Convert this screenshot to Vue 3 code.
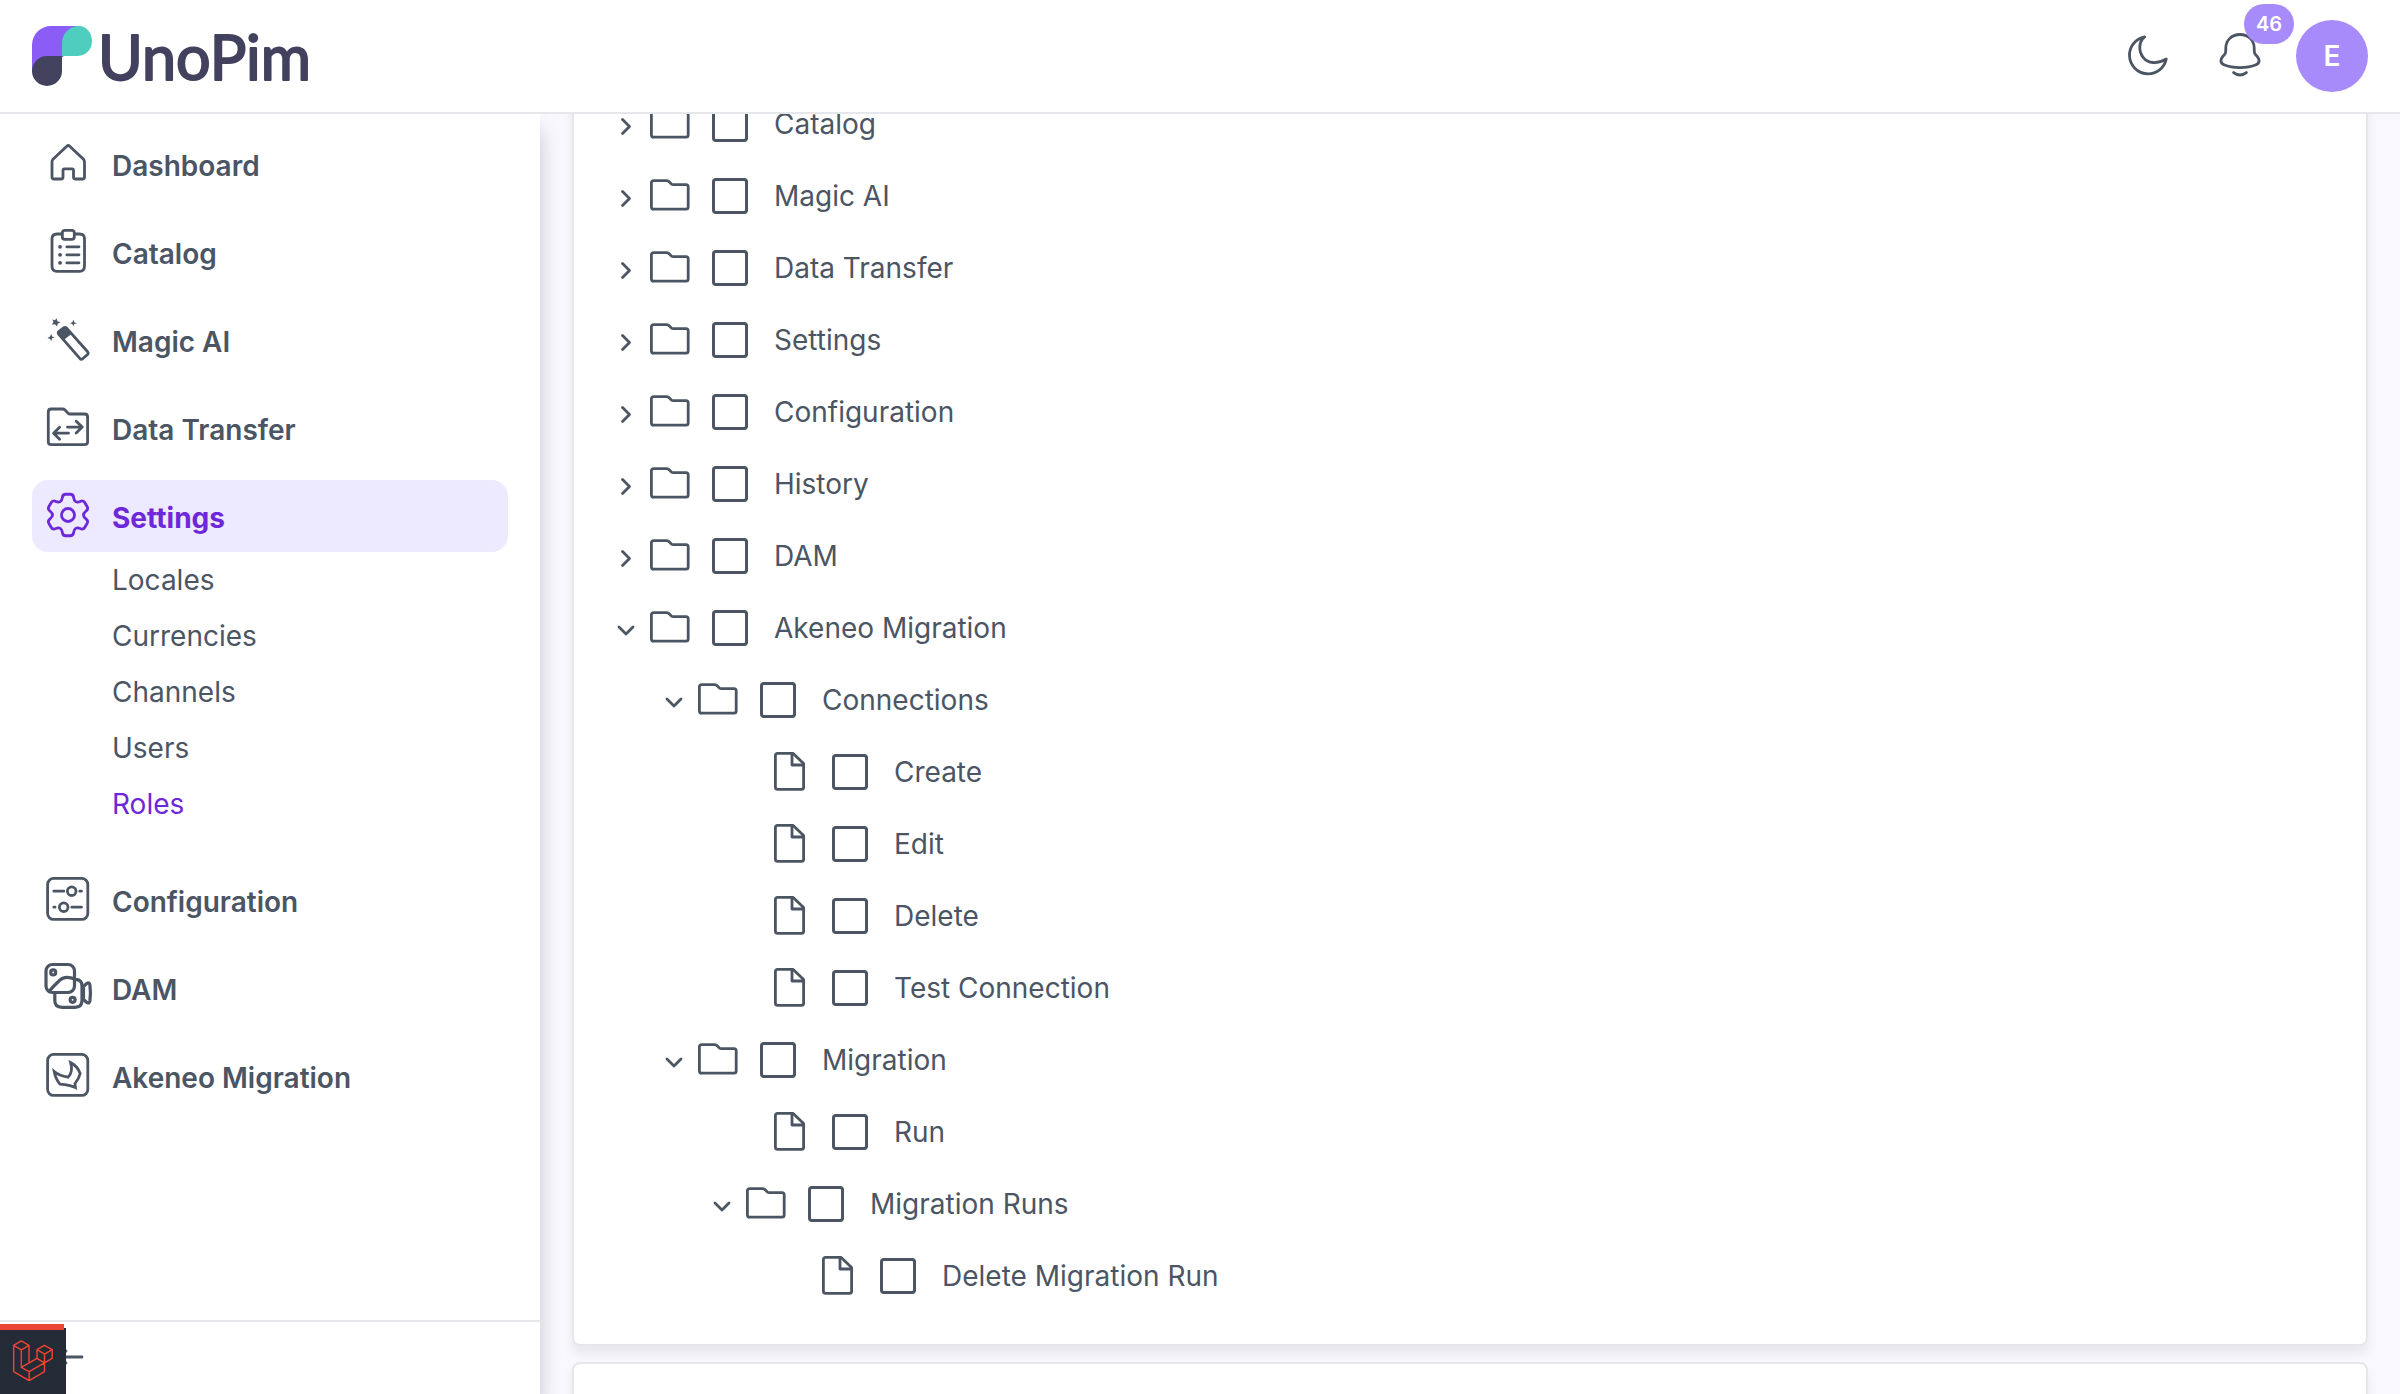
<script setup>
/**
 * Role permissions page: top bar, side navigation and the permission tree.
 */
import { computed, onMounted, ref } from 'vue'

// closed path through the points, with each corner rounded off
function roundedPath(points, r) {
  const n = points.length
  const towards = (from, to) => {
    const d = Math.hypot(to[0] - from[0], to[1] - from[1])
    const t = Math.min(r / d, 0.5)
    return [from[0] + (to[0] - from[0]) * t, from[1] + (to[1] - from[1]) * t]
  }
  const fmt = (p) => p.map((v) => v.toFixed(2)).join(' ')
  const parts = points.map((p, i) => {
    const a = towards(p, points[(i + n - 1) % n])
    const b = towards(p, points[(i + 1) % n])
    return `${i ? 'L' : 'M'}${fmt(a)} Q${fmt(p)} ${fmt(b)}`
  })
  return parts.join(' ') + 'Z'
}

function gearPath(cx, cy) {
  const tooth = [[15.6, -23], [21.4, -14], [21.4, 14], [15.6, 23]]
  const points = []
  for (let k = 0; k < 6; k++) {
    for (const [r, deg] of tooth) {
      const a = ((k * 60 + deg) * Math.PI) / 180
      points.push([cx + r * Math.sin(a), cy - r * Math.cos(a)])
    }
  }
  return roundedPath(points, 3)
}

const gear = gearPath(24, 23)

const menu = [
  { label: 'Dashboard', icon: 'home' },
  { label: 'Catalog', icon: 'catalog' },
  { label: 'Magic AI', icon: 'magic' },
  { label: 'Data Transfer', icon: 'transfer' },
  {
    label: 'Settings',
    icon: 'settings',
    active: true,
    children: [
      { label: 'Locales' },
      { label: 'Currencies' },
      { label: 'Channels' },
      { label: 'Users' },
      { label: 'Roles', active: true },
    ],
  },
  { label: 'Configuration', icon: 'configuration' },
  { label: 'DAM', icon: 'dam' },
  { label: 'Akeneo Migration', icon: 'akeneo' },
]

const permissions = ref([
  { key: 'catalog', label: 'Catalog', folder: true },
  { key: 'magic_ai', label: 'Magic AI', folder: true },
  { key: 'data_transfer', label: 'Data Transfer', folder: true },
  { key: 'settings', label: 'Settings', folder: true },
  { key: 'configuration', label: 'Configuration', folder: true },
  { key: 'history', label: 'History', folder: true },
  { key: 'dam', label: 'DAM', folder: true },
  {
    key: 'akeneo', label: 'Akeneo Migration', folder: true, open: true,
    children: [
      {
        key: 'akeneo.connections', label: 'Connections', folder: true, open: true,
        children: [
          { key: 'akeneo.connections.create', label: 'Create' },
          { key: 'akeneo.connections.edit', label: 'Edit' },
          { key: 'akeneo.connections.delete', label: 'Delete' },
          { key: 'akeneo.connections.test', label: 'Test Connection' },
        ],
      },
      {
        key: 'akeneo.migration', label: 'Migration', folder: true, open: true,
        children: [
          { key: 'akeneo.migration.run', label: 'Run' },
          {
            key: 'akeneo.migration.runs', label: 'Migration Runs', folder: true, open: true,
            children: [{ key: 'akeneo.migration.runs.delete', label: 'Delete Migration Run' }],
          },
        ],
      },
    ],
  },
])

const rows = computed(() => {
  const out = []
  const walk = (nodes, level) => {
    for (const node of nodes) {
      out.push({ node, level })
      if (node.open && node.children) walk(node.children, level + 1)
    }
  }
  walk(permissions.value, 0)
  return out
})

const selected = ref([])
const content = ref(null)

onMounted(() => {
  content.value.scrollTop = 92
})
</script>

<template>
  <div class="layout">
    <header class="topbar">
      <a class="logo" href="#" aria-label="UnoPim">
        <svg class="logo__mark" viewBox="0 0 60 60" aria-hidden="true">
          <path fill="#8b5cf6" d="M0 45V19A19 19 0 0 1 19 0H46L31 31L15 32Z" />
          <path fill="#4fcdbf" d="M30 30V17A17 17 0 0 1 47 0A13 15 0 0 1 60 15A14 15 0 0 1 46 30Z" />
          <path fill="#42425f" d="M30 30V45A15 15 0 0 1 0 45A15 15 0 0 1 15 30Z" />
        </svg>
        <svg class="logo__name" viewBox="0 0 210 60" aria-hidden="true">
          <text x="-4" y="54">UnoPim</text>
        </svg>
      </a>
      <div class="topbar__actions">
        <button class="icon-btn" type="button" aria-label="Dark mode">
          <svg class="icon" viewBox="0 0 48 48">
            <path d="M20.7 4.9A18.6 18.6 0 1 0 42.3 27C38 29.6 34 30.9 29 30.5C20.5 29.8 15.6 22.5 15.8 15C15.9 11 17.5 7.5 20.7 4.9Z" />
          </svg>
        </button>
        <button class="icon-btn" type="button" aria-label="Notifications">
          <svg class="icon" viewBox="0 0 48 48">
            <path d="M24 2.5C15 2.5 9.8 9 9.8 16C9.8 20 10 21.5 7 24.3C4.3 27 3.8 31 8 32.8C17 36.6 31 36.6 40 32.8C44.2 31 43.7 27 41 24.3C38 21.5 38.2 20 38.2 16C38.2 9 33 2.5 24 2.5Z" />
            <path d="M17.6 40.6Q24 45.4 30.4 40.6" />
          </svg>
          <span class="icon-btn__badge">46</span>
        </button>
        <button class="avatar" type="button">E</button>
      </div>
    </header>

    <div class="body">
      <aside class="sidebar">
        <nav class="menu">
          <div v-for="item in menu" :key="item.label">
            <a href="#" class="menu__link" :class="{ 'menu__link--active': item.active }">
              <svg class="icon" viewBox="0 0 48 48" aria-hidden="true">
                <path
                  v-if="item.icon === 'home'"
                  d="M22.8 6.2L9 19.3Q8 20.3 8 22V37Q8 39 10 39H17Q19 39 19 37V30.2Q19 28.8 20.4 28.8H28.1Q29.5 28.8 29.5 30.2V37Q29.5 39 31.5 39H38.5Q40.5 39 40.5 37V22Q40.5 20.3 39.5 19.3L25.7 6.2Q24.2 4.8 22.8 6.2Z"
                />
                <template v-else-if="item.icon === 'catalog'">
                  <path d="M18 6H13Q8 6 8 11V38Q8 43.3 13 43.3H35.5Q40.5 43.3 40.5 38V11Q40.5 6 35.5 6H30.5" />
                  <rect x="18.3" y="2.3" width="12" height="9" rx="2.5" />
                  <path d="M16 18.8H16.1M16 26.8H16.1M16 34.8H16.1" stroke-width="3.8" />
                  <path d="M22.8 18.8H35M22.8 26.8H35M22.8 34.8H35" />
                </template>
                <template v-else-if="item.icon === 'magic'">
                  <path d="M14.8 18.3Q13.6 16.7 15.1 15.4L19.7 11.8Q21.3 10.7 22.6 12.2L43.6 35.8Q44.8 37.3 43.4 38.6L38.6 42.8Q37.1 43.9 35.8 42.3Z" />
                  <path class="fill" d="M13.6 17.5L21 10.8L28 17.5L19.8 24Z" />
                  <path class="fill" d="M12.5 2.2L13.6 5.4L16.6 6L13.7 7.7L13.1 10.6L11 8.3L7.8 8.6L9.5 6L8.4 3.4L11 4.3Z" />
                  <path class="fill" d="M29.3 3.6L30.2 6.3L33 7.2L30.2 8.1L29.3 10.6L28.4 8.1L26 7.2L28.4 6.3Z" />
                  <path class="fill" d="M7.4 17.8L8 20.6L10.6 21.3L8 22.6L7.2 25.2L6 22.8L3.4 22.2L5.8 20.7Z" />
                </template>
                <template v-else-if="item.icon === 'transfer'">
                  <path d="M7.2 5H18.6Q20 5 21 6L24.4 9.4Q25 10 26 10H40.6Q43.6 10 43.6 13V37.7Q43.6 40.7 40.6 40.7H7.2Q4.3 40.7 4.3 37.7V8Q4.3 5 7.2 5Z" />
                  <path d="M23.5 23.1H38M32.2 17.2L38.2 23.1L32.2 29M24.5 29.2H9.8M15.6 23.3L9.6 29.2L15.6 35.2" />
                </template>
                <template v-else-if="item.icon === 'settings'">
                  <path :d="gear" />
                  <circle cx="24" cy="23" r="6.5" />
                </template>
                <template v-else-if="item.icon === 'configuration'">
                  <rect x="3.6" y="2.4" width="40.2" height="41" rx="6" />
                  <path d="M9.8 15.2H19.8M35.8 15.2H37.5M9.8 31.2H11M27.8 31.2H37.5" />
                  <circle cx="27.7" cy="15.2" r="4.3" />
                  <circle cx="19.7" cy="31.2" r="4.3" />
                </template>
                <g v-else-if="item.icon === 'dam'" stroke-width="3.2">
                  <rect x="2" y="0.5" width="28.5" height="28" rx="6.5" />
                  <path d="M10.8 29V36.5Q10.8 43.3 18 43.3H31Q38 43.3 38 36.5V22Q38 15.5 31.5 15.3C26 13 20 11.5 15.5 16.5Q10 21.5 5 27.5" />
                  <path d="M39.5 22.5L42.6 19.6Q45.2 17.8 45.9 21Q47 29 45.9 37Q45.2 40.2 42.6 38.3L39.5 35.5Z" />
                  <circle cx="9.2" cy="8.4" r="2.5" />
                  <circle cx="28.6" cy="35.8" r="2.5" />
                </g>
                <template v-else-if="item.icon === 'akeneo'">
                  <rect x="3.6" y="2.4" width="40.2" height="41" rx="6" />
                  <path
                    stroke-linejoin="miter"
                    d="M10.2 19.5Q15 23.8 24 25.2Q29.4 20 26.6 10.6Q33 13.5 36.2 21.5Q35 26.5 31 31.5L31.4 35.6Q26 33 16 32.2Q11.6 27 10.2 19.5Z"
                  />
                </template>
              </svg>
              {{ item.label }}
            </a>
            <div v-if="item.children" class="submenu">
              <a
                v-for="child in item.children"
                :key="child.label"
                href="#"
                class="submenu__link"
                :class="{ 'submenu__link--active': child.active }"
              >{{ child.label }}</a>
            </div>
          </div>
        </nav>
        <button class="sidebar__collapse" type="button" aria-label="Collapse menu">
          <svg class="icon" viewBox="0 0 48 48"><path d="M38 23H16M22 17L16 23L22 29" /></svg>
        </button>
      </aside>

      <main ref="content" class="content">
        <section class="card" aria-label="Permissions">
          <div
            v-for="{ node, level } in rows"
            :key="node.key"
            class="tree-row"
            :class="{ 'tree-row--leaf': !node.folder }"
            :style="{ '--level': level }"
          >
            <button
              v-if="node.folder"
              class="tree-row__toggle"
              type="button"
              :aria-label="'Toggle ' + node.label"
              :aria-expanded="!!node.open"
              @click="node.open = !node.open"
            >
              <svg viewBox="0 0 40 40">
                <path v-if="node.open" d="M13 19L20 26L27 19" />
                <path v-else d="M16.5 15.5L23.5 22.5L16.5 29.5" />
              </svg>
            </button>
            <svg class="icon" viewBox="0 0 48 48" aria-hidden="true">
              <path
                v-if="node.folder"
                d="M7.6 8.6H20.6Q21.8 8.6 22.6 9.3L25.4 12Q26.2 12.7 27.4 12.7H40Q42.2 12.7 42.2 15V35Q42.2 37.2 40 37.2H7.6Q5.4 37.2 5.4 35V10.8Q5.4 8.6 7.6 8.6Z"
              />
              <template v-else>
                <path d="M11.6 5.4H27.2L37.6 15.6V39.2Q37.6 41.4 35.4 41.4H11.6Q9.4 41.4 9.4 39.2V7.6Q9.4 5.4 11.6 5.4Z" />
                <path d="M26 6V17H37.4" />
              </template>
            </svg>
            <label class="tree-row__label">
              <input v-model="selected" type="checkbox" :value="node.key" />
              {{ node.label }}
            </label>
          </div>
        </section>
        <section class="card card--general"></section>
      </main>
    </div>

    <button class="debugbar" type="button" aria-label="Open debug bar">
      <svg viewBox="0 0 50 52">
        <path d="M.8 6.4L10.4 .9L20 6.4L10.4 12ZM.8 6.4V39.3L20.2 50.5L39.4 39.3V28.3M10.4 12V34L20.2 39.4V50.5M20 6.4V28.3M30 11.8L39.4 6.4L49 11.8L39.4 17.3ZM30 11.8V22.7L39.4 28.3V17.3M49 11.8V22.7L20.2 39.4M30 22.7L10.4 34" />
      </svg>
    </button>
  </div>
</template>

<style>
body { margin: 0; overflow: hidden; }
</style>

<style scoped>
.layout {
  display: flex; flex-direction: column; height: 100vh;
  background: #f9f8ff; color: #4b5563;
  font-family: Inter, 'Liberation Sans', sans-serif;
  font-size: 28px; line-height: 40px;
}
.layout *, .layout *::before { box-sizing: border-box; }

a { color: inherit; text-decoration: none; }
button {
  margin: 0; padding: 0; border: 0; background: none;
  color: inherit; font: inherit; cursor: pointer;
}
svg { display: block; }

.icon {
  flex-shrink: 0; width: 48px; height: 48px; overflow: visible;
  fill: none; stroke: currentColor; stroke-width: 2.8;
  stroke-linecap: round; stroke-linejoin: round;
}
.icon .fill { fill: currentColor; stroke: none; }

.topbar {
  position: relative; z-index: 2;
  flex-shrink: 0; display: flex; align-items: center; justify-content: space-between;
  padding: 20px 32px; background: #fff; border-bottom: 2px solid #e5e7eb;
}
.topbar__actions { display: flex; align-items: center; gap: 20px; }

.logo { display: flex; align-items: center; gap: 10px; }
.logo__mark { width: 60px; height: 60px; }
.logo__name { width: 210px; height: 60px; overflow: visible; }
.logo__name text {
  font-family: Lato, sans-serif; font-size: 61px; font-weight: 400;
  fill: #42425f; stroke: #42425f; stroke-width: 2; stroke-linejoin: round;
}

.icon-btn { position: relative; padding: 12px; }
.icon-btn__badge {
  position: absolute; top: -16px; left: 40px;
  padding: 0 12px; border-radius: 20px;
  background: #a78bfa; color: #fff; font-size: 20px; font-weight: 600;
}
.avatar {
  width: 72px; height: 72px; border-radius: 50%;
  background: #a78bfa; color: #fff; font-weight: 600;
}

.body { flex: 1; display: flex; min-height: 0; }

.sidebar {
  flex: 0 0 540px; display: flex; flex-direction: column; z-index: 1;
  background: #fff; box-shadow: 0 16px 20px rgba(0, 0, 0, 0.2);
}
.menu {
  flex: 1; display: flex; flex-direction: column; gap: 16px;
  min-height: 0; padding: 14px 32px; overflow: hidden;
}
.menu__link {
  display: flex; align-items: flex-end; gap: 20px;
  padding: 12px; border-radius: 16px;
  font-weight: 600; line-height: 44px;
}
.menu__link--active { background: #ede9fe; color: #6d28d9; font-weight: 700; }
.submenu { display: grid; padding: 0 0 16px 80px; }
.submenu__link { padding: 8px 0; }
.submenu__link--active { color: #6d28d9; }
.sidebar__collapse { padding: 12px 44px; border-top: 2px solid #e5e7eb; }

.content {
  flex: 1; min-width: 0; padding: 32px;
  overflow-y: auto; scrollbar-width: none;
}
.card {
  padding: 32px; border: 2px solid #e5e7eb; border-radius: 8px;
  background: #fff; box-shadow: 0 8px 12px rgba(0, 0, 0, 0.07);
}
.card + .card { margin-top: 16px; }
.card--general { min-height: 480px; }

.tree-row { display: flex; align-items: center; height: 72px; padding-left: calc(var(--level) * 48px); }
.tree-row--leaf { padding-left: calc(var(--level) * 48px + 64px); }
.tree-row__toggle svg {
  width: 40px; height: 40px;
  fill: none; stroke: currentColor; stroke-width: 2.8;
  stroke-linecap: round; stroke-linejoin: round;
}
.tree-row__label { display: flex; align-items: center; gap: 26px; margin-left: 18px; cursor: pointer; }
.tree-row__label input {
  appearance: none; width: 36px; height: 36px; margin: 0;
  border: 3px solid #4b5563; border-radius: 4px;
}
.tree-row__label input:checked { background: #6d28d9; border-color: #6d28d9; }

.debugbar {
  position: fixed; left: 0; bottom: 0; z-index: 3;
  display: grid; place-items: center;
  width: 66px; height: 66px; background: #252a37;
}
.debugbar::before {
  content: ''; position: absolute; top: -4px; left: 0;
  width: 64px; height: 6px; background: #eb4432;
}
.debugbar svg {
  width: 40px; height: 42px; overflow: visible;
  fill: none; stroke: #eb4432; stroke-width: 1.8; stroke-linejoin: round;
}
</style>
